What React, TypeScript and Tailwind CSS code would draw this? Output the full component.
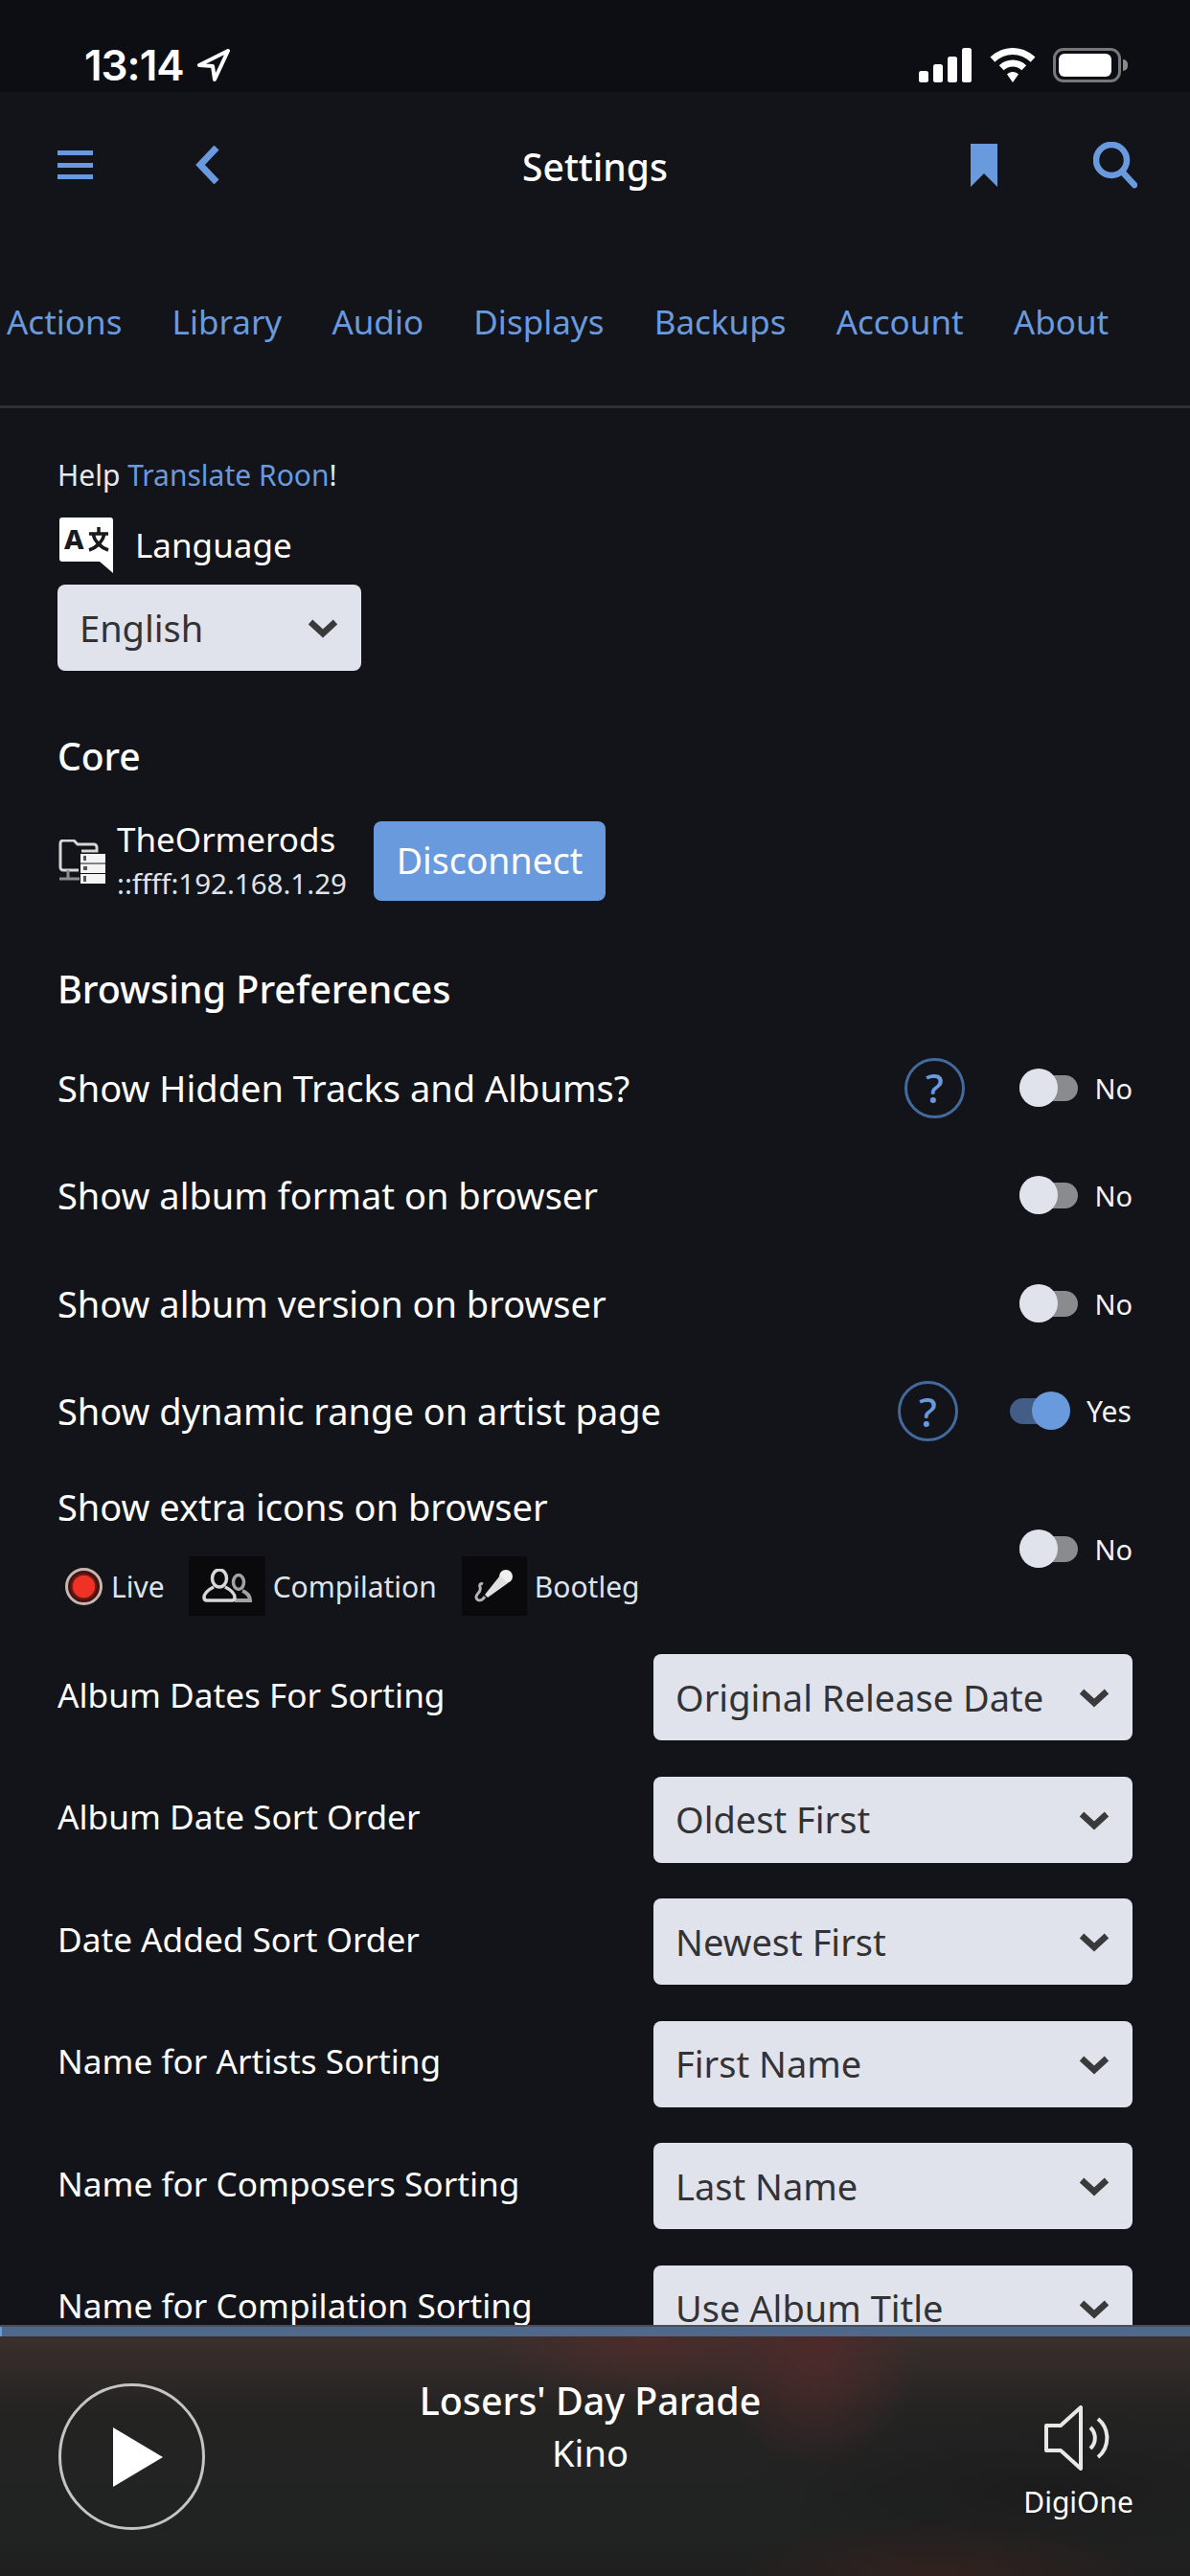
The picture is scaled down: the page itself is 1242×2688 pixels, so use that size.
const tabs = ["Actions", "Library", "Audio", "Displays", "Backups", "Account", "About"];

const sortSelects = [
  ["Album Dates For Sorting", "Original Release Date"],
  ["Album Date Sort Order", "Oldest First"],
  ["Date Added Sort Order", "Newest First"],
  ["Name for Artists Sorting", "First Name"],
  ["Name for Composers Sorting", "Last Name"],
  ["Name for Compilation Sorting", "Use Album Title"],
];

function Chevron() {
  return (
    <svg width="32" height="24" viewBox="0 0 32 24" className="shrink-0">
      <path d="M3 6 L16 18 L29 6" fill="none" stroke="#3a3a3c" strokeWidth="6.5" strokeLinejoin="miter" />
    </svg>
  );
}

function Select({ value, className }: { value: string; className: string }) {
  return (
    <div className={`flex h-[90px] items-center justify-between rounded-[8px] bg-[#e0e3eb] pl-[23px] pr-[24px] text-[38px] text-[#333336] ${className}`}>
      <span>{value}</span>
      <Chevron />
    </div>
  );
}

function Toggle({ on }: { on: boolean }) {
  if (on) {
    return (
      <div className="flex w-[128px] items-center">
        <div className="relative h-[27px] w-[50px] rounded-l-full bg-[#425d86]">
          <div className="absolute left-[23px] top-[-7px] h-[40px] w-[40px] rounded-full bg-[#6a9ade]" />
        </div>
        <span className="ml-[30px] text-[30px] leading-none text-[#f2f3f6]">Yes</span>
      </div>
    );
  }
  return (
    <div className="flex w-[118px] items-center">
      <div className="relative h-[27px] w-[63px] rounded-full bg-[#8a8b8e]">
        <div className="absolute left-0 top-[-7px] h-[40px] w-[40px] rounded-full bg-[#e0e3eb]" />
      </div>
      <span className="ml-[17px] text-[29px] leading-none text-[#f2f3f6]">No</span>
    </div>
  );
}

function HelpCircle() {
  return (
    <div className="flex h-[63px] w-[63px] items-center justify-center rounded-full border-[3px] border-[#44699c] text-[42px] font-medium leading-none text-[#6a9ade]">
      ?
    </div>
  );
}

function SwitchRow({ label, on = false, help = "" }: { label: string; on?: boolean; help?: string }) {
  return (
    <div className="flex h-[112.5px] items-center justify-between">
      <span className="text-[38px] text-white">{label}</span>
      <div className="flex items-center">
        {help && <div className={help}><HelpCircle /></div>}
        <Toggle on={on} />
      </div>
    </div>
  );
}

function LanguageIcon() {
  return (
    <svg width="60" height="60" viewBox="0 0 60 60">
      <path d="M5 1 H55 a3 3 0 0 1 3 3 V59 L44 47 H5 a3 3 0 0 1 -3 -3 V4 a3 3 0 0 1 3 -3 Z" fill="#fff" />
      <text x="7" y="34" fontFamily="'Noto Sans'" fontWeight="800" fontSize="29" fill="#1a1a1e">A</text>
      <path d="M43 11 V17 M33 18 H53 M49 18 C47 27 41 32 33 35 M37 18 C39 27 45 32 53 35" fill="none" stroke="#1a1a1e" strokeWidth="3.5" />
    </svg>
  );
}

function CoreIcon() {
  return (
    <svg width="50" height="46" viewBox="0 0 50 46">
      <path d="M22 32 H6 a3 3 0 0 1 -3 -3 V4 a3 3 0 0 1 3 -3 H17 l4 4 H38 a3 3 0 0 1 3 3 V12 H25" fill="none" stroke="#d6d6d6" strokeWidth="3" />
      <path d="M11 32 V41 M2 41 H23" stroke="#8c8c8c" strokeWidth="3" />
      <rect x="24" y="15" width="26" height="9.5" fill="#f4f4f4" />
      <rect x="24" y="25.5" width="26" height="9.5" fill="#f4f4f4" />
      <rect x="24" y="36" width="26" height="10" fill="#f4f4f4" />
      <rect x="27" y="17" width="3" height="5" fill="#555" />
      <rect x="27" y="28" width="4" height="4" fill="#555" />
      <rect x="27" y="38" width="3" height="6" fill="#555" />
    </svg>
  );
}

function PeopleIcon() {
  return (
    <svg width="52" height="36" viewBox="0 0 52 36" fill="none">
      <ellipse cx="38" cy="14" rx="5.5" ry="7.5" stroke="#a2a2a2" strokeWidth="3.5" />
      <path d="M42 23 C47 25 50 28 50 33 H34" stroke="#a2a2a2" strokeWidth="4" />
      <ellipse cx="18" cy="10" rx="7.5" ry="9" stroke="#d8d8d8" strokeWidth="3.5" />
      <path d="M12 19 C6 22 2 26 2 30 Q2 33 5 33 H31 Q34 33 34 30 C34 26 30 22 24 19" stroke="#d8d8d8" strokeWidth="3.5" />
    </svg>
  );
}

function MicIcon() {
  return (
    <svg width="42" height="36" viewBox="0 0 42 36" fill="none">
      <circle cx="33" cy="8" r="7" fill="#f0f0f0" />
      <path d="M27 7 L35 15 L14 30 L11 27 Z" fill="#e0e0e0" />
      <path d="M11 29 C8 34 3 34 2 30 C1 26 8 25 6 19 C5 16 7 15 9 16" stroke="#b4b4b4" strokeWidth="3" />
    </svg>
  );
}

function StatusBar() {
  return (
    <div className="flex h-[96px] shrink-0 items-center justify-between bg-[#0d0e13] pl-[88px] pr-[65px] pt-[39px]">
      <div className="flex items-center gap-[14px]">
        <span className="font-['Inter'] text-[44px] font-semibold leading-none tracking-[-1px] text-white">13:14</span>
        <svg width="34" height="34" viewBox="0 0 34 34">
          <path d="M32 2 L2 17 L16 18 L18 32 Z" fill="none" stroke="#fff" strokeWidth="4" strokeLinejoin="round" />
        </svg>
      </div>
      <div className="flex items-center gap-[18px]">
        <svg width="56" height="36" viewBox="0 0 56 36" fill="#fff">
          <rect x="0" y="24" width="10" height="12" rx="2.5" />
          <rect x="15" y="17" width="10" height="19" rx="2.5" />
          <rect x="30" y="9" width="10" height="27" rx="2.5" />
          <rect x="45" y="0" width="10" height="36" rx="2.5" />
        </svg>
        <svg width="48" height="36" viewBox="0 0 48 36" fill="#fff">
          <path d="M24 0 C33 0 41 3.6 47.5 9.6 L42.6 14.8 C37.6 10 31 7 24 7 C17 7 10.4 10 5.4 14.8 L0.5 9.6 C7 3.6 15 0 24 0 Z" />
          <path d="M24 12.5 C29.5 12.5 34.5 14.7 38.2 18.2 L33.4 23.2 C30.8 20.8 27.6 19.4 24 19.4 C20.4 19.4 17.2 20.8 14.6 23.2 L9.8 18.2 C13.5 14.7 18.5 12.5 24 12.5 Z" />
          <path d="M24 25 C26.4 25 28.4 25.9 30 27.4 L24 36 L18 27.4 C19.6 25.9 21.6 25 24 25 Z" />
        </svg>
        <div className="flex items-center gap-[2px]">
          <div className="flex h-[36px] w-[71px] items-center rounded-[11px] border-[3px] border-[#77787a] p-[3px]">
            <div className="h-full w-[55px] rounded-[6px] bg-white" />
          </div>
          <div className="h-[12px] w-[5px] rounded-r-full bg-[#8a8a8a]" />
        </div>
      </div>
    </div>
  );
}

function Header() {
  return (
    <div className="flex h-[156px] shrink-0 items-center justify-between pl-[60px] pr-[55px] pb-[4px]">
      <div className="flex items-center gap-[107px]">
        <div className="flex h-[30px] w-[37px] flex-col justify-between">
          <div className="h-[5px] bg-[#6a9ade]" />
          <div className="h-[5px] bg-[#6a9ade]" />
          <div className="h-[5px] bg-[#6a9ade]" />
        </div>
        <svg width="25" height="40" viewBox="0 0 25 40">
          <path d="M22 2 L5 20 L22 38" fill="none" stroke="#6a9ade" strokeWidth="7" />
        </svg>
      </div>
      <div className="absolute left-0 right-0 top-[147px] text-center text-[39px] font-medium leading-[54px] text-white">
        Settings
      </div>
      <div className="flex items-center gap-[100px]">
        <svg width="28" height="45" viewBox="0 0 28 45">
          <path d="M0 0 H28 V45 L14 31 L0 45 Z" fill="#6a9ade" />
        </svg>
        <svg width="46" height="49" viewBox="0 0 46 49" fill="none">
          <circle cx="19" cy="19" r="16" stroke="#6a9ade" strokeWidth="6.5" />
          <path d="M30 31 L43 45" stroke="#6a9ade" strokeWidth="6.5" strokeLinecap="round" />
        </svg>
      </div>
    </div>
  );
}

function NowPlaying() {
  return (
    <div className="relative h-[250px] shrink-0 bg-[radial-gradient(ellipse_110px_130px_at_850px_10px,#4e2a2a,transparent),radial-gradient(ellipse_170px_70px_at_680px_0px,#4c2c2a,transparent),radial-gradient(ellipse_220px_60px_at_980px_250px,#32221f,transparent),radial-gradient(ellipse_330px_80px_at_1100px_160px,#1b1c1b,transparent),linear-gradient(to_bottom,#3a2f2d,#232322_32%,#212322_75%,#1f1f1f)]">
      <div className="flex h-full items-start justify-between pl-[61px] pr-[59px] pt-[49px]">
        <div className="flex h-[153px] w-[153px] items-center justify-center rounded-full border-[3px] border-[#c4c4c4] pl-[12px]">
          <svg width="52" height="62" viewBox="0 0 52 62">
            <path d="M0 0 L52 31 L0 62 Z" fill="#fff" />
          </svg>
        </div>
        <div className="flex flex-col items-center">
          <svg width="72" height="68" viewBox="0 0 72 68" className="mt-[23px]" fill="none" stroke="#e8e8e8" strokeWidth="4">
            <path d="M2 21 H17 L38 2 V66 L17 47 H2 Z" strokeLinejoin="round" />
            <path d="M48 23 A15 15 0 0 1 48 45" />
            <path d="M56 14 A26 26 0 0 1 56 54" />
          </svg>
          <span className="mt-[13px] text-[30px] leading-[40px] text-white">DigiOne</span>
        </div>
      </div>
      <div className="absolute left-0 top-[41px] w-[1232px] text-center text-white">
        <div className="text-[39.4px] font-medium leading-[52px]">Losers' Day Parade</div>
        <div className="mt-[3px] text-[38px] leading-[50px]">Kino</div>
      </div>
    </div>
  );
}

export default function App() {
  return (
    <div className="relative flex h-[2688px] w-[1242px] flex-col overflow-hidden bg-[#12141a] font-['Noto_Sans',sans-serif]">
      <StatusBar />
      <Header />
      <nav className="flex h-[174px] shrink-0 gap-[52.2px] border-b-[3px] border-[#2c2e33] pl-[7px] pt-[59px] text-[35px] leading-[50px] text-[#6a9ade]">
        {tabs.map((tab) => (
          <span key={tab}>{tab}</span>
        ))}
      </nav>

      <main className="min-h-0 flex-1 overflow-hidden pl-[60px] pr-[60px] pt-[50px]">
        <div className="text-[30px] leading-[40px] text-[#e6e8ed]">
          Help <span className="text-[#6a9ade]">Translate Roon</span>!
        </div>
        <div className="mt-[23px] flex h-[60px] items-center gap-[21px]">
          <LanguageIcon />
          <span className="text-[35px] text-white">Language</span>
        </div>
        <Select value="English" className="mt-[11px] w-[317px]" />

        <h2 className="mt-[64px] text-[39px] font-medium leading-[50px] text-white">Core</h2>
        <div className="mt-[43px] flex h-[83px] items-center">
          <CoreIcon />
          <div className="ml-[12px] flex w-[268px] flex-col">
            <span className="text-[35px] leading-[46px] text-white">TheOrmerods</span>
            <span className="text-[29.5px] leading-[46px] text-[#dfe3ea]">::ffff:192.168.1.29</span>
          </div>
          <div className="flex h-[83px] w-[242px] items-center justify-center rounded-[8px] bg-[#6a9ade] text-[37.5px] text-white">
            Disconnect
          </div>
        </div>

        <h2 className="mt-[67px] text-[39.5px] font-medium leading-[50px] text-white">Browsing Preferences</h2>
        <div className="mt-[22px]">
          <SwitchRow label="Show Hidden Tracks and Albums?" help="mr-[57px]" />
          <SwitchRow label="Show album format on browser" />
          <SwitchRow label="Show album version on browser" />
          <SwitchRow label="Show dynamic range on artist page" on help="mr-[54px]" />
          <div className="flex h-[197px] items-start justify-between">
            <div className="pt-[17px]">
              <div className="text-[38px] leading-[52px] text-white">Show extra icons on browser</div>
              <div className="mt-[26px] flex h-[62px] items-center text-[30px] text-[#dfe3ea]">
                <div className="ml-[8px] flex h-[39px] w-[39px] items-center justify-center rounded-full border-[3px] border-[#c8b4b0] bg-[#3c1210]">
                  <div className="h-[23px] w-[23px] rounded-full bg-[#ef3225] shadow-[0_0_4px_#ef3225]" />
                </div>
                <span className="ml-[9px]">Live</span>
                <div className="ml-[25px] flex h-[62px] w-[80px] items-center justify-center bg-[#0a0a0c]">
                  <PeopleIcon />
                </div>
                <span className="ml-[8px]">Compilation</span>
                <div className="ml-[26px] flex h-[62px] w-[68px] items-center justify-center bg-[#0a0a0c]">
                  <MicIcon />
                </div>
                <span className="ml-[8px]">Bootleg</span>
              </div>
            </div>
            <div className="mt-[73px]">
              <Toggle on={false} />
            </div>
          </div>
        </div>

        <div className="flex flex-col gap-[37.5px]">
          {sortSelects.map(([label, value]) => (
            <div key={label} className="flex items-center justify-between">
              <span className="pb-[6px] text-[35.2px] text-white">{label}</span>
              <Select value={value} className="w-[500px]" />
            </div>
          ))}
        </div>
      </main>

      <div className="h-[2px] shrink-0 bg-[#4a4f55]" />
      <div className="h-[10px] shrink-0 bg-[#50688c]">
        <div className="h-full w-[2px] bg-[#6a9ade]" />
      </div>
      <NowPlaying />
    </div>
  );
}
